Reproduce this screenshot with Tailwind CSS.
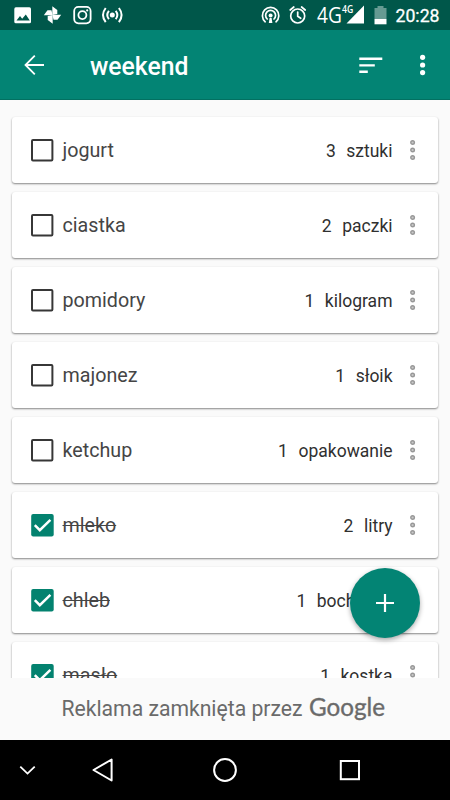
<!DOCTYPE html>
<html lang="pl">
<head>
<meta charset="utf-8">
<title>weekend</title>
<script src="https://cdn.jsdelivr.net/npm/@tailwindcss/browser@4"></script>
</head>
<body class="bg-[#fafafa] font-[Roboto,sans-serif]">
<svg class="hidden">
  <symbol id="dots" viewBox="0 0 6 22"><g fill="#c8c8c8" stroke="#989898" stroke-width="1.4"><circle cx="2.6" cy="3.5" r="1.8"/><circle cx="2.6" cy="11" r="1.8"/><circle cx="2.6" cy="18.5" r="1.8"/></g></symbol>
  <symbol id="box" viewBox="0 0 24 24"><rect x="2" y="2" width="20.4" height="20.4" rx="1" fill="none" stroke="#373737" stroke-width="2"/></symbol>
  <symbol id="checked" viewBox="0 0 24 24"><rect x="1.2" y="1" width="22.5" height="22.5" rx="2" fill="#03826f"/><path d="M4.8 12.2l5 5L20.4 6.8" fill="none" stroke="#fff" stroke-width="2.5"/></symbol>
</svg>
<div class="relative w-[450px] h-[800px] flex flex-col overflow-hidden">
  <header class="shrink-0">
    <div class="h-[30px] bg-[#00574a] flex items-center text-white">
      <svg class="w-[130px] h-[30px]" viewBox="0 0 130 30" fill="none">
        <rect x="14.3" y="7.3" width="16.7" height="16" rx="1.6" fill="#fff"/>
        <path d="M16.5 20.5l3.5-4.5 2.2 2.8 3.6-4.3 4 6z" fill="#00574a"/>
        <g fill="#fff">
          <path d="M52.3 15V6.3l5 3.7V14z"/>
          <path d="M52.3 15V6.3l5 3.7V14z" transform="rotate(90 52.5 15)"/>
          <path d="M52.3 15V6.3l5 3.7V14z" transform="rotate(180 52.5 15)"/>
          <path d="M52.3 15V6.3l5 3.7V14z" transform="rotate(270 52.5 15)"/>
        </g>
        <g stroke="#fff" stroke-width="1.8"><rect x="74.2" y="6.9" width="16.4" height="16.4" rx="4.2"/><circle cx="82.4" cy="15.1" r="4"/></g>
        <circle cx="87.2" cy="10.4" r="1.1" fill="#fff"/>
        <circle cx="112.3" cy="15" r="2.5" fill="#fff"/>
        <g stroke="#fff" stroke-width="2"><path d="M108.9 10.8q-3.3 4.2 0 8.4M115.7 10.8q3.3 4.2 0 8.4M105.7 8q-5.4 7 0 14.2M118.9 8q5.4 7 0 14.2"/></g>
      </svg>
      <svg class="w-[190px] h-[30px] ml-[130px]" viewBox="260 0 190 30" fill="none">
        <g stroke="#fff" stroke-width="1.7" stroke-linecap="round">
          <path d="M265.2 21.8a8.2 8.2 0 1 1 10.8 0"/><path d="M267.2 19a5 5 0 1 1 6.8 0"/>
          <circle cx="297.7" cy="16" r="7"/><path d="M297.7 12v4.3l3 2M290.2 10l3.6-3M305.2 10l-3.6-3"/>
        </g>
        <circle cx="270.6" cy="15.6" r="2" fill="#fff"/><path d="M268.8 23l.8-5h2l.8 5z" fill="#fff"/>
        <text x="317" y="23.3" font-size="21.5" textLength="24.8" lengthAdjust="spacingAndGlyphs" fill="#fff" font-family="Open Sans, sans-serif">4G</text>
        <text x="342" y="13.2" font-size="10" font-weight="600" textLength="11.3" lengthAdjust="spacingAndGlyphs" fill="#fff" font-family="Open Sans, sans-serif">4G</text>
        <path d="M364 5.5V23.5H346.5z" fill="#fff"/>
        <path d="M374.5 8h3V6h6v2h3v11h-12z" fill="#669a92"/><path d="M374.5 19h12v5.3h-12z" fill="#fff"/>
        <text x="395.5" y="22.2" font-size="18.5" textLength="44" lengthAdjust="spacingAndGlyphs" fill="#fff" stroke="#fff" stroke-width=".3" font-family="Roboto, sans-serif">20:28</text>
      </svg>
    </div>
    <div class="h-[70px] bg-[#038474] border-b border-[#027061] flex items-center">
      <svg class="w-6 h-6 ml-[23px]" viewBox="0 0 24 24" fill="none" stroke="#fff" stroke-width="1.8"><path d="M21 12H2.6M11.8 2.7L2.5 12l9.3 9.3"/></svg>
      <h1 class="ml-[43px] text-white text-[25px] leading-8 font-medium whitespace-nowrap"><svg class="w-[100px] h-8" viewBox="0 0 100 32"><text x="0" y="26" textLength="98.5" lengthAdjust="spacingAndGlyphs" fill="#fff">weekend</text></svg></h1>
      <svg class="w-6 h-5 ml-auto" viewBox="0 0 24 20" fill="#fff"><path d="M0.3 2.4h23v2.6h-23zM.3 9.2h15.5v2.4H.3zM.3 15.4h8.5v2.5H.3z"/></svg>
      <svg class="w-1.5 h-[22px] ml-[37px] mr-[24px]" viewBox="0 0 6 22" fill="#fff"><circle cx="2.6" cy="3.3" r="2.6"/><circle cx="2.6" cy="11" r="2.6"/><circle cx="2.6" cy="18.6" r="2.6"/></svg>
    </div>
  </header>

  <main class="h-[578px] shrink-0 overflow-hidden pt-[17px] px-3 flex flex-col gap-[9px] text-[#454545] text-[19.7px]">
    <div class="h-[66px] shrink-0 bg-white rounded-[3px] shadow-[0_1px_2px_#0007] flex items-center pl-[18px] pr-[22px]"><svg class="size-6"><use href="#box"/></svg><span class="ml-[8.5px] pt-px">jogurt</span><span class="ml-auto pt-[3px] text-[17.5px] text-[#303030] flex gap-[10.5px]"><span>3</span><span>sztuki</span></span><svg class="w-1.5 h-[22px] ml-[17.5px]"><use href="#dots"/></svg></div>
    <div class="h-[66px] shrink-0 bg-white rounded-[3px] shadow-[0_1px_2px_#0007] flex items-center pl-[18px] pr-[22px]"><svg class="size-6"><use href="#box"/></svg><span class="ml-[8.5px] pt-px">ciastka</span><span class="ml-auto pt-[3px] text-[17.5px] text-[#303030] flex gap-[10.5px]"><span>2</span><span>paczki</span></span><svg class="w-1.5 h-[22px] ml-[17.5px]"><use href="#dots"/></svg></div>
    <div class="h-[66px] shrink-0 bg-white rounded-[3px] shadow-[0_1px_2px_#0007] flex items-center pl-[18px] pr-[22px]"><svg class="size-6"><use href="#box"/></svg><span class="ml-[8.5px] pt-px">pomidory</span><span class="ml-auto pt-[3px] text-[17.5px] text-[#303030] flex gap-[10.5px]"><span>1</span><span>kilogram</span></span><svg class="w-1.5 h-[22px] ml-[17.5px]"><use href="#dots"/></svg></div>
    <div class="h-[66px] shrink-0 bg-white rounded-[3px] shadow-[0_1px_2px_#0007] flex items-center pl-[18px] pr-[22px]"><svg class="size-6"><use href="#box"/></svg><span class="ml-[8.5px] pt-px">majonez</span><span class="ml-auto pt-[3px] text-[17.5px] text-[#303030] flex gap-[10.5px]"><span>1</span><span>słoik</span></span><svg class="w-1.5 h-[22px] ml-[17.5px]"><use href="#dots"/></svg></div>
    <div class="h-[66px] shrink-0 bg-white rounded-[3px] shadow-[0_1px_2px_#0007] flex items-center pl-[18px] pr-[22px]"><svg class="size-6"><use href="#box"/></svg><span class="ml-[8.5px] pt-px">ketchup</span><span class="ml-auto pt-[3px] text-[17.5px] text-[#303030] flex gap-[10.5px]"><span>1</span><span>opakowanie</span></span><svg class="w-1.5 h-[22px] ml-[17.5px]"><use href="#dots"/></svg></div>
    <div class="h-[66px] shrink-0 bg-white rounded-[3px] shadow-[0_1px_2px_#0007] flex items-center pl-[18px] pr-[22px]"><svg class="size-6"><use href="#checked"/></svg><span class="ml-[8.5px] pt-px line-through">mleko</span><span class="ml-auto pt-[3px] text-[17.5px] text-[#303030] flex gap-[10.5px]"><span>2</span><span>litry</span></span><svg class="w-1.5 h-[22px] ml-[17.5px]"><use href="#dots"/></svg></div>
    <div class="h-[66px] shrink-0 bg-white rounded-[3px] shadow-[0_1px_2px_#0007] flex items-center pl-[18px] pr-[22px]"><svg class="size-6"><use href="#checked"/></svg><span class="ml-[8.5px] pt-px line-through">chleb</span><span class="ml-auto pt-[3px] text-[17.5px] text-[#303030] flex gap-[10.5px]"><span>1</span><span>bochenek</span></span><svg class="w-1.5 h-[22px] ml-[17.5px]"><use href="#dots"/></svg></div>
    <div class="h-[66px] shrink-0 bg-white rounded-[3px] shadow-[0_1px_2px_#0007] flex items-center pl-[18px] pr-[22px]"><svg class="size-6"><use href="#checked"/></svg><span class="ml-[8.5px] pt-px line-through">masło</span><span class="ml-auto pt-[3px] text-[17.5px] text-[#303030] flex gap-[10.5px]"><span>1</span><span>kostka</span></span><svg class="w-1.5 h-[22px] ml-[17.5px]"><use href="#dots"/></svg></div>
  </main>

  <footer class="h-[62px] shrink-0 bg-[#fafafa]">
    <svg class="w-[450px] h-[62px]" viewBox="0 678 450 62" fill="#6a6a6a">
      <text x="61.5" y="716" font-size="22.5" textLength="241" lengthAdjust="spacingAndGlyphs">Reklama zamknięta przez</text>
      <text x="309" y="716" font-size="24.5" textLength="76" lengthAdjust="spacingAndGlyphs" font-family="Lato, sans-serif" stroke="#6a6a6a" stroke-width=".35">Google</text>
    </svg>
  </footer>

  <nav class="h-[60px] shrink-0 bg-black">
    <svg class="w-[450px] h-[60px]" viewBox="0 740 450 60" fill="none" stroke="#fff" stroke-width="2">
      <path d="M20.3 766.6l7.2 7 7.2-7" stroke-width="1.8"/>
      <path d="M111.6 759.5v21L93.5 770z" stroke-linejoin="round"/>
      <circle cx="225" cy="770" r="10.9"/>
      <rect x="340.8" y="761" width="18.2" height="18.2"/>
    </svg>
  </nav>

  <button aria-label="Dodaj" class="absolute left-[350px] top-[567.5px] size-[70px] rounded-full bg-[#038474] shadow-[0_2px_5px_#0005] flex items-center justify-center">
    <svg class="size-5" viewBox="0 0 20 20" stroke="#fff" stroke-width="2.2"><path d="M10 1v18M1 10h18"/></svg>
  </button>
</div>
</body>
</html>
